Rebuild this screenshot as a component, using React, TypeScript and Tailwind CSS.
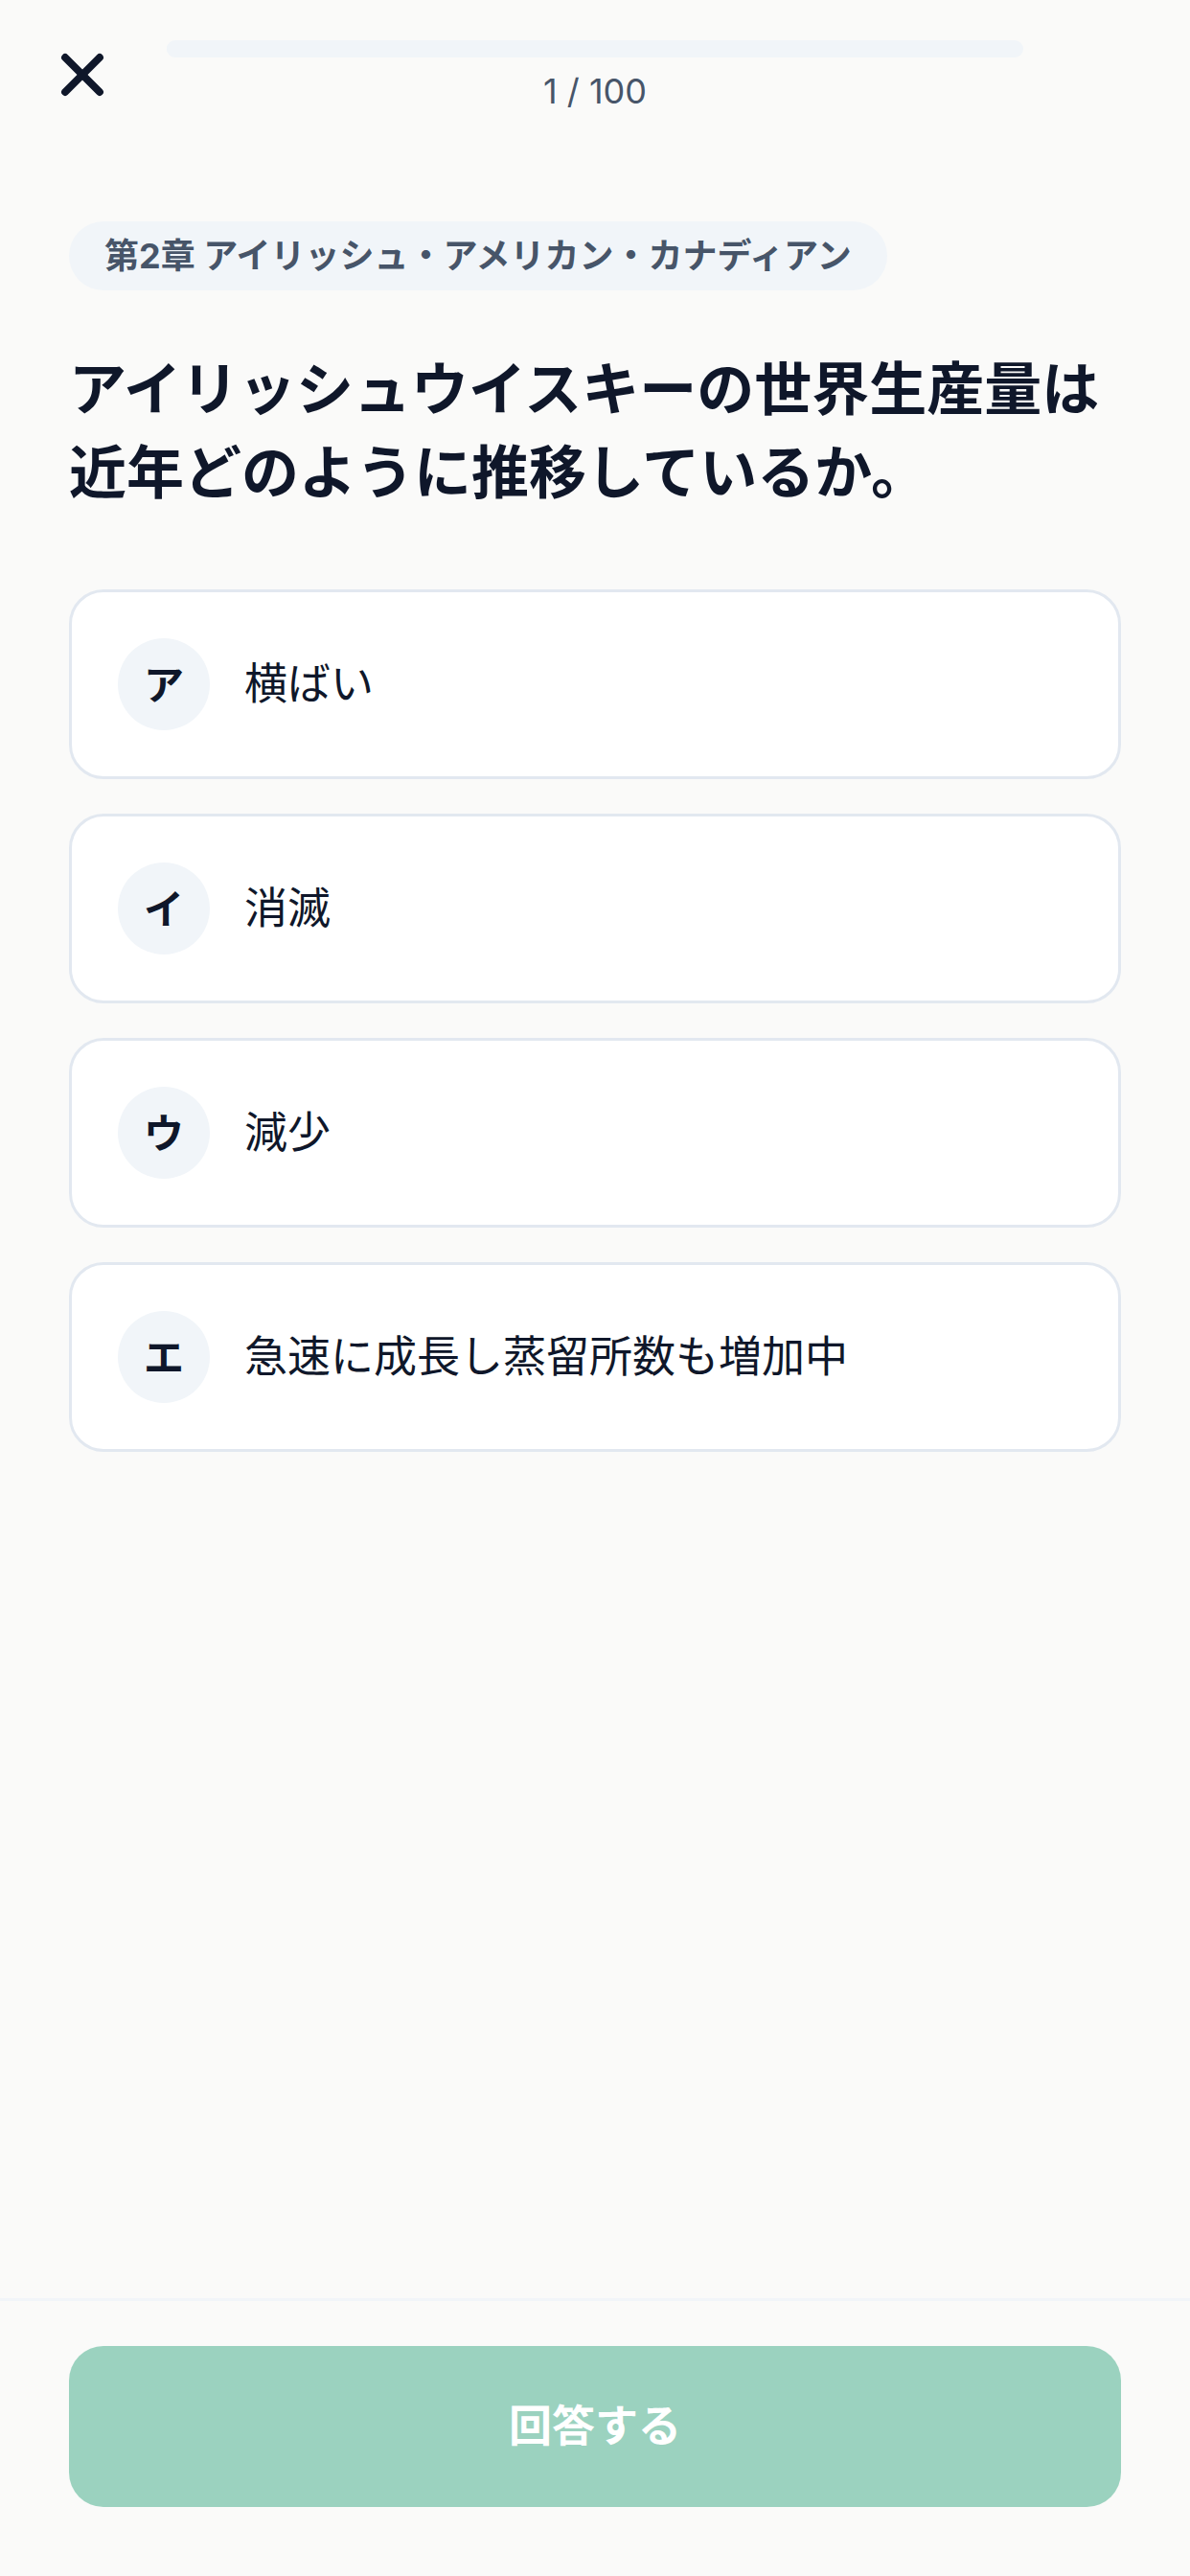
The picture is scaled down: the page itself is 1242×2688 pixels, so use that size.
import React, { useState } from 'react';

const choices = [
  { key: 'ア', label: '横ばい' },
  { key: 'イ', label: '消滅' },
  { key: 'ウ', label: '減少' },
  { key: 'エ', label: '急速に成長し蒸留所数も増加中' },
];

const font = { fontFamily: '"Inter", "Noto Sans CJK JP", sans-serif' };

const App: React.FC = () => {
  const [selected, setSelected] = useState<string | null>(null);

  return (
    <div className="h-screen flex flex-col bg-[#fafaf9] text-[#0f172a]" style={font}>
      {/* ヘッダー */}
      <header className="flex items-start px-[50px] pt-[42px] gap-[52px]">
        <button className="w-[72px] h-[72px] flex items-center justify-center text-[#0f172a]">
          <svg width="72" height="72" viewBox="0 0 24 24" fill="none" stroke="currentColor" strokeWidth="2.6" strokeLinecap="round">
            <path d="M18 6 6 18" />
            <path d="m6 6 12 12" />
          </svg>
        </button>
        <div className="flex-1 flex flex-col items-center">
          <div className="w-full h-[18px] rounded-full bg-[#f1f5f9] overflow-hidden">
            <div className="h-full w-[1%] bg-[#f1f5f9] rounded-full" />
          </div>
          <p className="mt-[11px] text-[36px] leading-[48px] text-[#475569]">1 / 100</p>
        </div>
        <div className="w-[72px] h-[72px]" />
      </header>

      <main className="flex-1 px-[72px] pt-[112px]">
        {/* 章タグ */}
        <div className="inline-flex items-center h-[72px] px-[37px] rounded-full bg-[#f1f5f9]">
          <span className="text-[36px] font-bold text-[#475569]">
            第2章 アイリッシュ・アメリカン・カナディアン
          </span>
        </div>

        {/* 問題文 */}
        <h1 className="mt-[60px] text-[60px] leading-[87px] font-bold">
          アイリッシュウイスキーの世界生産量は近年どのように推移しているか。
        </h1>

        {/* 選択肢 */}
        <div className="mt-[78px] flex flex-col gap-[36px]">
          {choices.map((c) => (
            <button
              key={c.key}
              onClick={() => setSelected(c.key)}
              className={`flex items-center gap-[36px] p-[48px] rounded-[36px] bg-white border-[3px] text-left ${
                selected === c.key ? 'border-[#34a883]' : 'border-[#e2e8f0]'
              }`}
            >
              <span className="w-[96px] h-[96px] shrink-0 rounded-full bg-[#f1f5f9] flex items-center justify-center text-[42px] font-bold">
                {c.key}
              </span>
              <span className="text-[45px] leading-[60px]">{c.label}</span>
            </button>
          ))}
        </div>
      </main>

      {/* 回答ボタン */}
      <footer className="border-t-[3px] border-[#f1f5f9] px-[72px] pt-[47px] pb-[72px]">
        <button className="w-full h-[168px] rounded-[36px] bg-[#9bd2bf] text-white text-[45px] font-bold">
          回答する
        </button>
      </footer>
    </div>
  );
};

export default App;
